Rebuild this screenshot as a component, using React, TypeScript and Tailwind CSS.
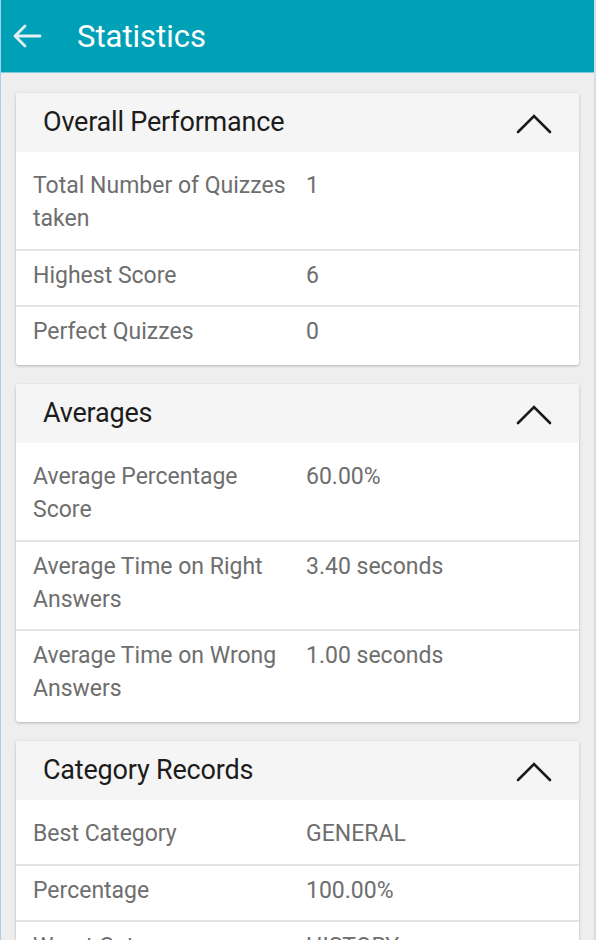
import React from "react";

interface StatRow {
  label: string;
  value: string;
}

interface StatSection {
  title: string;
  rows: StatRow[];
}

const sections: StatSection[] = [
  {
    title: "Overall Performance",
    rows: [
      { label: "Total Number of Quizzes taken", value: "1" },
      { label: "Highest Score", value: "6" },
      { label: "Perfect Quizzes", value: "0" },
    ],
  },
  {
    title: "Averages",
    rows: [
      { label: "Average Percentage Score", value: "60.00%" },
      { label: "Average Time on Right Answers", value: "3.40 seconds" },
      { label: "Average Time on Wrong Answers", value: "1.00 seconds" },
    ],
  },
  {
    title: "Category Records",
    rows: [
      { label: "Best Category", value: "GENERAL" },
      { label: "Percentage", value: "100.00%" },
      { label: "Worst Category", value: "HISTORY" },
      { label: "Percentage", value: "0.00%" },
    ],
  },
];

function ChevronUp() {
  return (
    <svg width="36" height="22" viewBox="0 0 36 22" fill="none">
      <path
        d="M2 20 L18 4 L34 20"
        stroke="#1a1a1a"
        strokeWidth="2.6"
        strokeLinecap="round"
        strokeLinejoin="miter"
      />
    </svg>
  );
}

function BackArrow() {
  return (
    <svg width="30" height="26" viewBox="0 0 30 26" fill="none">
      <path
        d="M28 13 H4 M13 3 L3 13 L13 23"
        stroke="#e4eff2"
        strokeWidth="2.8"
        strokeLinecap="round"
        strokeLinejoin="round"
      />
    </svg>
  );
}

function SectionCard({ section }: { section: StatSection }) {
  return (
    <div className="bg-white rounded-[3px] shadow-[0_1px_3px_rgba(0,0,0,0.25)] overflow-hidden">
      {/* Card header */}
      <div className="h-[59px] bg-[#f5f5f5] flex items-center justify-between pl-[27px] pr-[27px]">
        <span className="text-[27px] text-[#1c1c1c] tracking-[-0.2px]">{section.title}</span>
        <ChevronUp />
      </div>

      {/* Rows: first row gets extra top room, last row extra bottom room */}
      {section.rows.map((row, i) => (
        <div
          key={i}
          className={`flex px-[17px] text-[23px] leading-[33px] text-[#6e6e6e] ${
            i === 0 ? "pt-[17px] pb-[14px]" : "border-t-2 border-[#e4e4e4] pt-[8px] pb-[13px]"
          } ${i === section.rows.length - 1 ? "pb-[17px]" : ""}`}
        >
          <div className="w-[273px] shrink-0 pr-3">{row.label}</div>
          <div className="flex-1">{row.value}</div>
        </div>
      ))}
    </div>
  );
}

export default function App() {
  return (
    <div
      className="w-[596px] h-[940px] overflow-hidden bg-[#eeeeee] border-l border-l-[#a9cdf2] border-r-2 border-r-[#d3dde3]"
      style={{ fontFamily: "Roboto, 'Noto Sans', sans-serif" }}
    >
      {/* Toolbar */}
      <div className="h-[73px] bg-[#00a1b7] border-b border-[#7fcbe0] flex items-center">
        <div className="pl-[11px] pr-[35px] flex items-center">
          <BackArrow />
        </div>
        <h1 className="text-[31px] text-white pt-[2px]">Statistics</h1>
      </div>

      <div className="flex flex-col gap-[19px] px-[15px] pt-[20px]">
        {sections.map((s) => (
          <SectionCard key={s.title} section={s} />
        ))}
      </div>
    </div>
  );
}
